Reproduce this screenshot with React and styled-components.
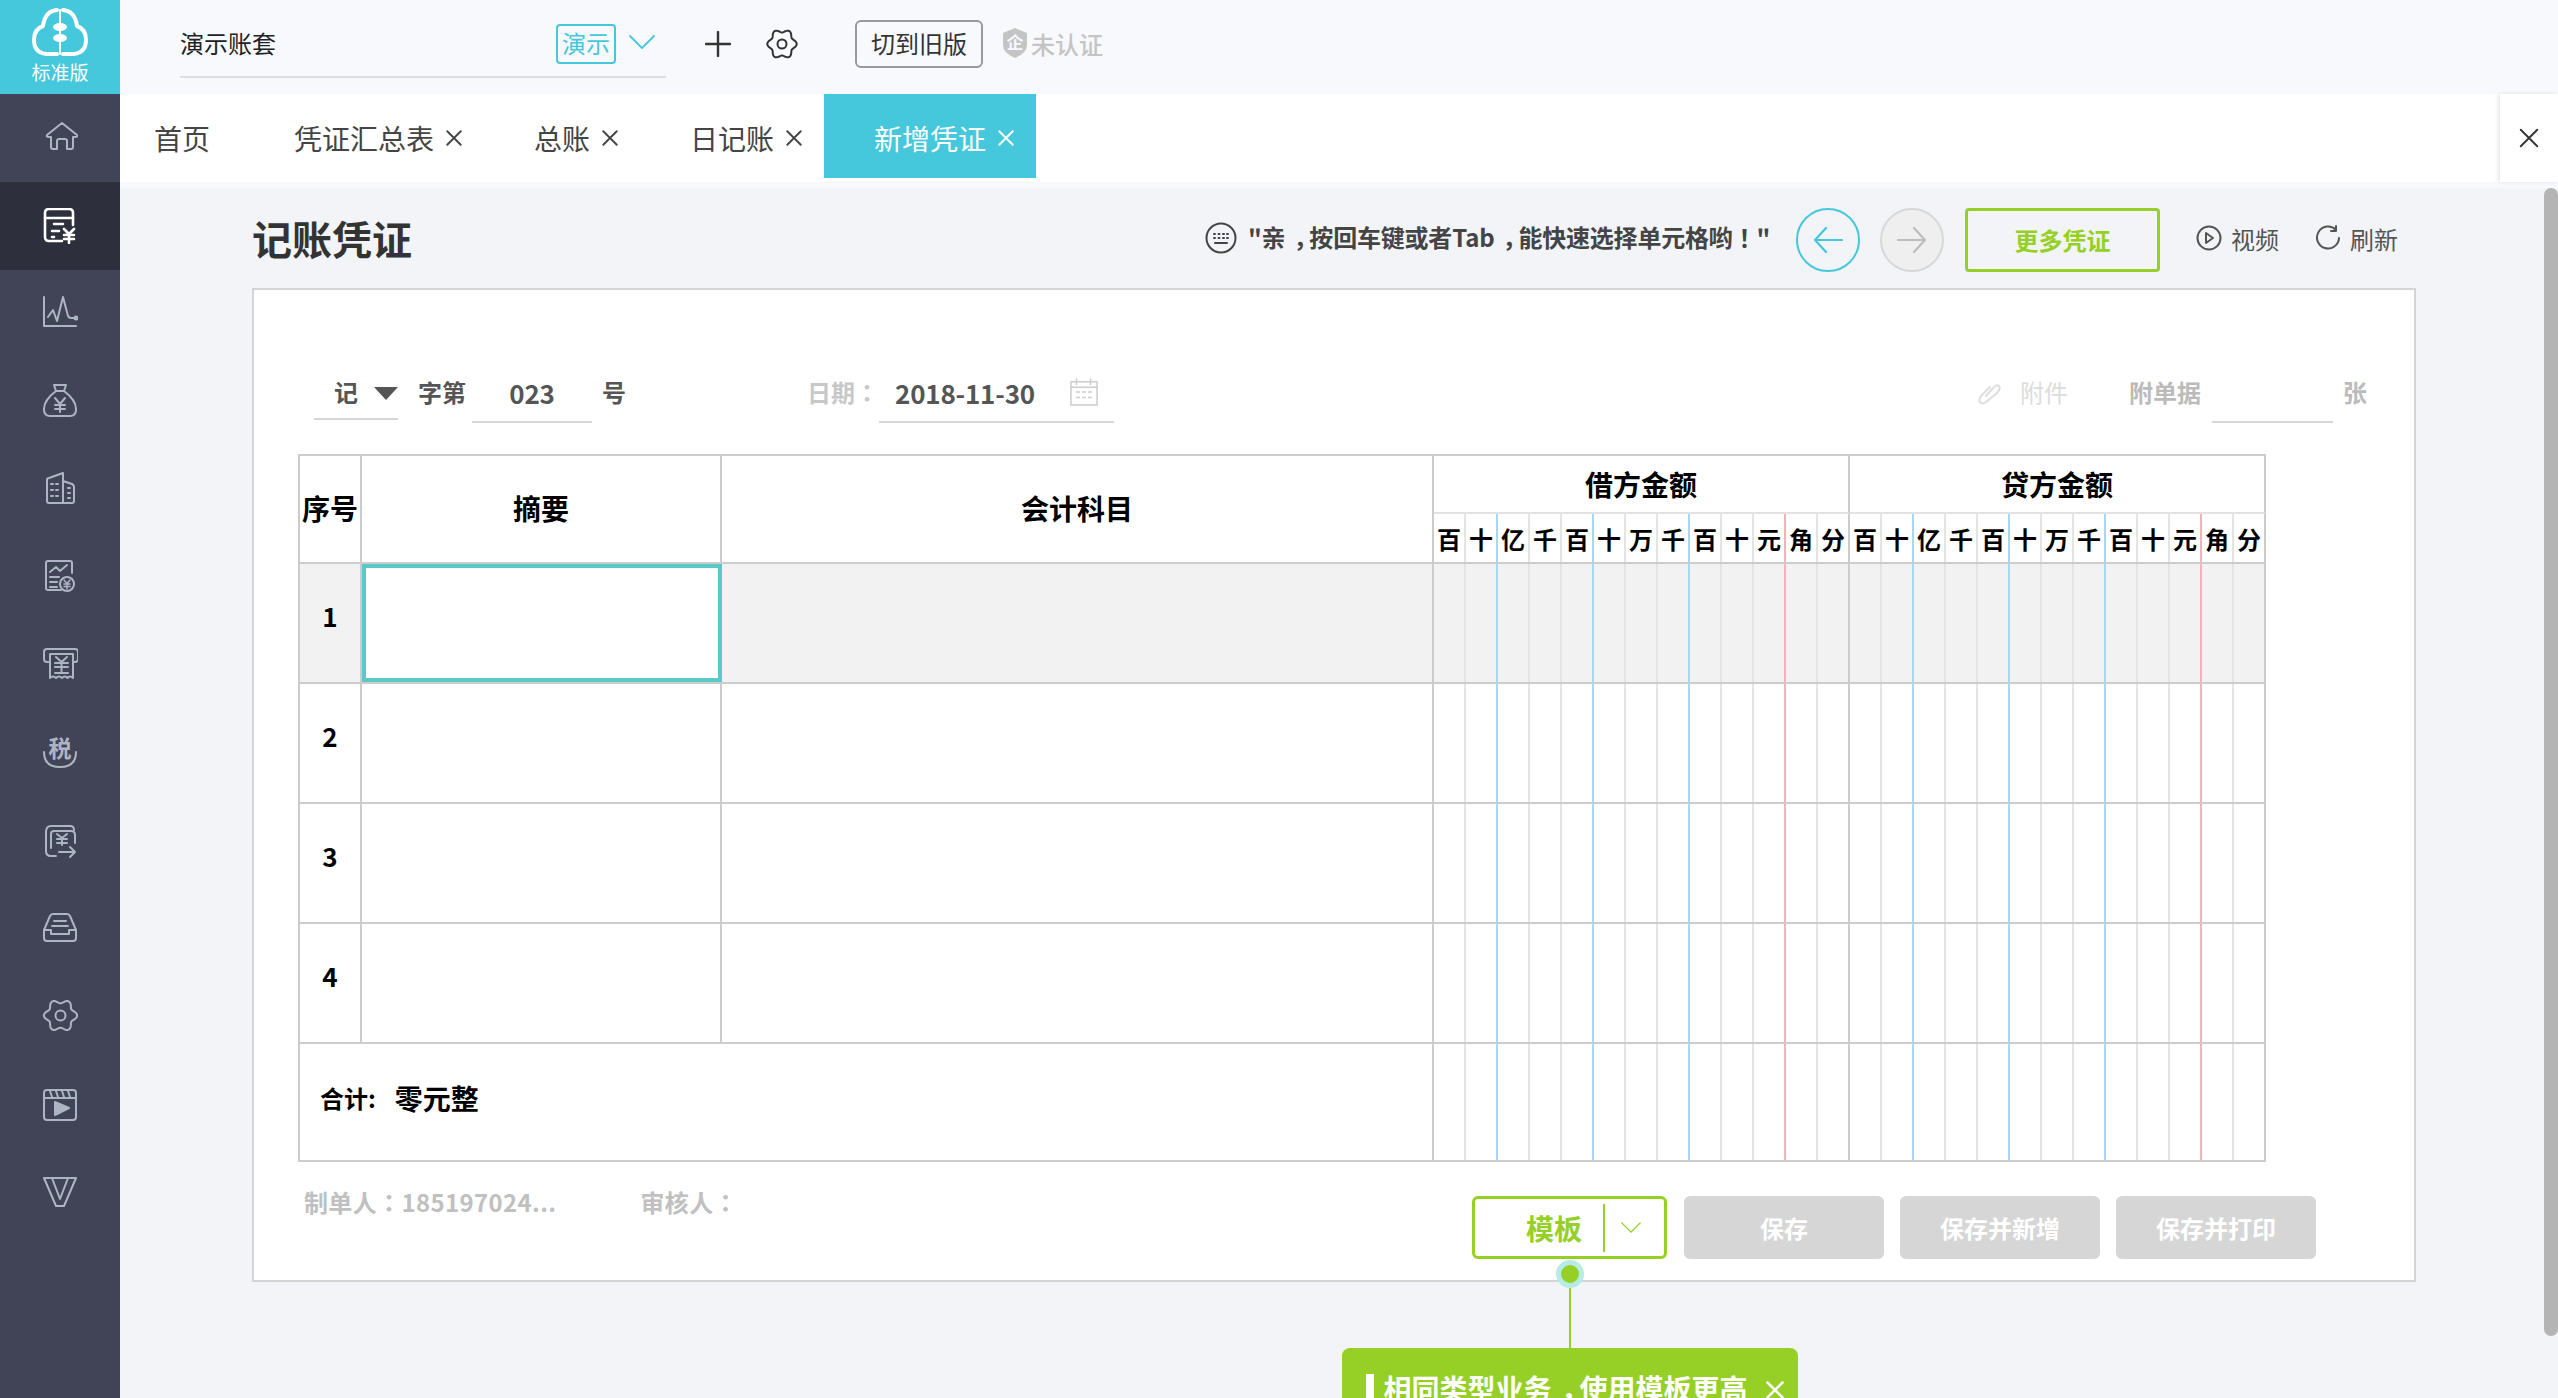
import React from "react";
import styled, { createGlobalStyle } from "styled-components";

const GREEN = "#96d026";
const TEAL = "#46c8dc";
const FONT = `"Noto Sans CJK SC", "Noto Sans", sans-serif`;

const Global = createGlobalStyle`
  html, body { margin: 0; padding: 0; width: 100%; height: 100%; overflow: hidden; }
  body { font-family: ${FONT}; background: #f8f9fd; }
  #root { width: 100%; height: 100%; }
  * { box-sizing: border-box; }
  svg { display: block; flex: none; }
`;

const Page = styled.div`
  display: flex;
  width: 2558px;
  height: 1398px;
  overflow: hidden;
`;

/* punctuation set centred in its em box, as in the reference */
const Punct = styled.span`
  font-family: "Noto Sans CJK TC", sans-serif;
`;
const Comma = styled.span`
  display: inline-block;
  padding-left: 0.34em;
  letter-spacing: -0.34em;
`;

/* ---------- sidebar ---------- */
const Sidebar = styled.aside`
  flex: none;
  width: 120px;
  background: #414356;
  display: flex;
  flex-direction: column;
`;
const Logo = styled.div`
  height: 94px;
  background: ${TEAL};
  display: flex;
  flex-direction: column;
  align-items: center;
  padding-top: 7px;
  color: #fff;
`;
const LogoText = styled.span`
  font-size: 19px;
  line-height: 22px;
  margin-top: 4px;
`;
const NavItem = styled.div`
  height: 88px;
  display: flex;
  align-items: center;
  justify-content: center;
  background: ${(p) => (p.$active ? "#2d2f3d" : "transparent")};
  color: ${(p) => (p.$active ? "#ffffff" : "#adb5c2")};
`;

/* ---------- top ---------- */
const Main = styled.main`
  flex: 1;
  min-width: 0;
  display: flex;
  flex-direction: column;
  background: #f8f9fd;
`;
const TopBar = styled.header`
  height: 94px;
  flex: none;
  display: flex;
  align-items: flex-start;
  padding-left: 60px;
`;
const AccountBox = styled.div`
  width: 486px;
  height: 63px;
  margin-top: 15px;
  padding: 0 11px 3px 0;
  border-bottom: 2px solid #dddddd;
  display: flex;
  align-items: center;
  font-size: 24px;
  color: #222;
`;
const AccountName = styled.span`
  padding-bottom: 3px;
`;
const Tag = styled.span`
  margin-left: auto;
  width: 60px;
  height: 40px;
  border: 2px solid ${TEAL};
  border-radius: 4px;
  color: ${TEAL};
  font-size: 24px;
  line-height: 33px;
  text-align: center;
  margin-right: 13px;
`;
const TagArrow = styled.span`
  color: ${TEAL};
  margin-bottom: 5px;
`;
const Tools = styled.div`
  height: 88px;
  display: flex;
  align-items: center;
  color: #333;
`;
const PlusWrap = styled.span`
  margin-left: 39px;
`;
const GearWrap = styled.span`
  margin-left: 34px;
`;
const OldButton = styled.button`
  margin-left: 56px;
  width: 128px;
  height: 48px;
  padding: 0 0 3px;
  border: 2px solid #999;
  border-radius: 6px;
  background: transparent;
  font-family: ${FONT};
  font-size: 24px;
  color: #333;
`;
const Unverified = styled.div`
  margin-left: 19px;
  display: flex;
  align-items: center;
  gap: 3px;
  color: #c4c4c4;
  font-size: 24px;
  font-weight: 500;
  padding-bottom: 2px;
`;

/* ---------- tabs ---------- */
const TabBar = styled.nav`
  height: 88px;
  flex: none;
  margin-bottom: 6px;
  background: #fff;
  display: flex;
  align-items: flex-start;
`;
const Tab = styled.div`
  height: 84px;
  padding: 4px ${(p) => (p.$home ? "34px" : "21px")} 0 ${(p) => (p.$home ? "34px" : "50px")};
  display: flex;
  align-items: center;
  gap: 11px;
  font-size: 28px;
  color: ${(p) => (p.$active ? "#fff" : "#444")};
  background: ${(p) => (p.$active ? TEAL : "transparent")};
`;
const CloseAll = styled.div`
  margin-left: auto;
  width: 58px;
  height: 88px;
  display: flex;
  align-items: center;
  justify-content: center;
  color: #333;
  box-shadow: -2px 0 4px rgba(0, 0, 0, 0.1);
`;

/* ---------- content ---------- */
const Content = styled.section`
  flex: 1;
  min-height: 0;
  position: relative;
  overflow: hidden;
  background: #f2f4f7;
  padding: 20px 0 0 132px;
`;
const Scrollbar = styled.div`
  position: absolute;
  top: 0;
  right: 0;
  width: 14px;
  height: 1148px;
  background: #b4b4b4;
  border-radius: 7px;
`;
const TitleRow = styled.div`
  width: 2164px;
  height: 64px;
  margin-bottom: 16px;
  padding-right: 18px;
  display: flex;
  align-items: center;
`;
const Title = styled.h1`
  margin: 0;
  padding-bottom: 5px;
  font-size: 40px;
  line-height: 58px;
  font-weight: 700;
  color: #333;
`;
const Hint = styled.div`
  margin-left: auto;
  padding-bottom: 5px;
  display: flex;
  align-items: center;
  gap: 11px;
  font-size: 24px;
  font-weight: 700;
  color: #444;
`;
const HintText = styled.span`
  letter-spacing: -0.2px;
  padding-bottom: 2px;
`;
const RoundButton = styled.span`
  width: 64px;
  height: 64px;
  margin-left: ${(p) => p.$ml}px;
  border-radius: 50%;
  border: 2px solid ${(p) => (p.$on ? TEAL : "#d8d8d8")};
  background: ${(p) => (p.$on ? "transparent" : "#efefef")};
  color: ${(p) => (p.$on ? TEAL : "#bdbdbd")};
  display: flex;
  align-items: center;
  justify-content: center;
`;
const MoreButton = styled.button`
  width: 195px;
  height: 64px;
  margin-left: 21px;
  padding: 0 0 2px;
  border: 3px solid ${GREEN};
  border-radius: 4px;
  background: transparent;
  font-family: ${FONT};
  font-size: 24px;
  font-weight: 700;
  color: ${GREEN};
`;
const ActionLink = styled.span`
  margin-left: 36px;
  padding-bottom: 4px;
  display: flex;
  align-items: center;
  gap: 9px;
  font-size: 24px;
  color: #555;
`;

/* ---------- voucher card ---------- */
const Card = styled.div`
  width: 2164px;
  height: 994px;
  background: #fff;
  border: 2px solid #d4d4d4;
  padding: 73px 0 0 44px;
`;
const FormRow = styled.div`
  height: 61px;
  padding-right: 47px;
  display: flex;
  align-items: flex-start;
  font-size: 24px;
  font-weight: 700;
  color: #555;
  margin-bottom: 30px;
`;
const FormText = styled.span`
  margin-left: ${(p) => p.$ml || 0}px;
  height: 59px;
  line-height: 58px;
  white-space: nowrap;
  color: ${(p) => p.$color || "inherit"};
  font-weight: ${(p) => p.$weight || 700};
`;
const TypeSelect = styled.div`
  margin-left: 16px;
  width: 84px;
  height: 57px;
  padding-left: 20px;
  line-height: 58px;
  border-bottom: 2px solid #d6d6d6;
  position: relative;
`;
const Caret = styled.span`
  position: absolute;
  right: 0;
  top: 24px;
  width: 0;
  height: 0;
  border-left: 12px solid transparent;
  border-right: 12px solid transparent;
  border-top: 13px solid #555;
`;
const UnderField = styled.div`
  margin-left: ${(p) => p.$ml || 0}px;
  width: ${(p) => p.$w}px;
  height: 60px;
  padding-left: ${(p) => p.$pl || 0}px;
  border-bottom: 2px solid #d6d6d6;
  display: flex;
  align-items: center;
  justify-content: ${(p) => (p.$center ? "center" : "flex-start")};
  font-size: 26px;
  letter-spacing: -0.2px;
`;
const CalendarWrap = styled.span`
  margin-left: 35px;
  color: #ccc;
`;
const RightGroup = styled.div`
  margin-left: auto;
  display: flex;
  align-items: flex-start;
`;
const ClipWrap = styled.span`
  margin-top: 18px;
  margin-right: 19px;
  color: #ddd;
`;

/* ---------- table ---------- */
const Table = styled.div`
  width: 1968px;
  border-top: 2px solid #ccc;
  border-left: 2px solid #ccc;
  color: #000;
`;
const Row = styled.div`
  display: flex;
  height: ${(p) => p.$h}px;
  border-bottom: ${(p) => (p.$head ? "0" : "2px solid #ccc")};
  background: ${(p) => (p.$tint ? "#f2f2f2" : "transparent")};
`;
const Cell = styled.div`
  flex: none;
  width: ${(p) => p.$w}px;
  display: flex;
  align-items: center;
  justify-content: ${(p) => (p.$left ? "flex-start" : "center")};
  padding-left: ${(p) => (p.$left ? 20 : 0)}px;
  padding-bottom: ${(p) => (p.$left ? 9 : 0)}px;
  border-right: 2px solid #ccc;
  font-size: 28px;
  font-weight: 700;
`;
const HeadCell = styled(Cell)`
  height: 108px;
  border-bottom: 2px solid #ccc;
  padding-bottom: 2px;
`;
const NumberCell = styled(Cell)`
  font-size: 26px;
  padding-bottom: 15px;
`;
const ActiveCell = styled(Cell)`
  border: 4px solid #5bc9c7;
  background: #fff;
`;
const AmountHead = styled.div`
  flex: none;
  width: 416px;
  height: 108px;
  display: flex;
  flex-direction: column;
  border-bottom: 2px solid #ccc;
`;
const AmountTitle = styled.div`
  height: 58px;
  border-bottom: 2px solid #e2e2e2;
  border-right: 2px solid #ccc;
  display: flex;
  align-items: center;
  justify-content: center;
  font-size: 28px;
  font-weight: 700;
`;
const DigitRow = styled.div`
  flex: 1;
  min-height: 0;
  display: flex;
`;
const lineColor = (kind) =>
  kind === "blue" ? "#a8d8f0" : kind === "red" ? "#f0b4b8" : kind === "end" ? "#ccc" : "#e4e4e4";
const Digit = styled.div`
  flex: none;
  width: 32px;
  border-right: 2px solid ${(p) => lineColor(p.$kind)};
  display: flex;
  align-items: center;
  justify-content: center;
  font-size: 24px;
  font-weight: 700;
`;
const TotalLabel = styled.span`
  font-size: 24px;
  margin-right: 19px;
`;

/* ---------- footer ---------- */
const Footer = styled.div`
  margin-top: 24px;
  padding-right: 98px;
  display: flex;
  align-items: flex-start;
`;
const Signer = styled.span`
  margin-left: ${(p) => p.$ml}px;
  line-height: 32px;
  font-size: 24px;
  font-weight: 700;
  letter-spacing: 0.35px;
  color: #c0c0c0;
  white-space: nowrap;
`;
const Buttons = styled.div`
  margin-left: auto;
  margin-top: 10px;
  display: flex;
  gap: 16px;
`;
const TemplateButton = styled.div`
  width: 195px;
  height: 63px;
  margin-right: 1px;
  border: 3px solid ${GREEN};
  border-radius: 6px;
  background: #fff;
  color: ${GREEN};
  display: flex;
  align-items: center;
  position: relative;
  font-size: 28px;
  font-weight: 700;
`;
const TemplateLabel = styled.span`
  width: 130px;
  height: 48px;
  border-right: 2px solid ${GREEN};
  display: flex;
  align-items: center;
  justify-content: flex-end;
  padding-right: 21px;
`;
const TemplateArrow = styled.span`
  margin-left: 16px;
`;
const SaveButton = styled.button`
  width: 200px;
  height: 63px;
  padding: 0;
  border: 0;
  border-radius: 6px;
  background: #d6d6d6;
  color: #fff;
  font-family: ${FONT};
  font-size: 24px;
  font-weight: 700;
`;
const Guide = styled.div`
  position: absolute;
  top: 100%;
  left: 50%;
  transform: translateX(-50%);
  display: flex;
  flex-direction: column;
  align-items: center;
`;
const GuideDot = styled.span`
  width: 28px;
  height: 28px;
  border-radius: 50%;
  background: ${GREEN};
  border: 5px solid #b6ece4;
  margin-top: 4px;
`;
const GuideLine = styled.span`
  width: 2px;
  height: 60px;
  background: ${GREEN};
`;
const Tip = styled.div`
  width: 456px;
  height: 90px;
  background: ${GREEN};
  border-radius: 8px 8px 0 0;
  padding: 26px 0 0 24px;
  display: flex;
  align-items: flex-start;
  color: #fff;
`;
const TipBar = styled.span`
  flex: none;
  width: 8px;
  height: 40px;
  background: #fff;
  margin-right: 10px;
`;
const TipText = styled.span`
  font-size: 28px;
  font-weight: 700;
  line-height: 28px;
  white-space: nowrap;
  margin-right: 17px;
`;
const TipClose = styled.span`
  margin-top: 6px;
`;

/* ---------- icons ---------- */
const Ic = ({ children, w = 36, h = 36, vb, sw = 2 }) => (
  <svg width={w} height={h} viewBox={vb || `0 0 ${w} ${h}`} fill="none" stroke="currentColor" strokeWidth={sw} strokeLinecap="round" strokeLinejoin="round">
    {children}
  </svg>
);

const gearPath = (cx, cy, rx, ry, lobes, amp) => {
  const pts = [];
  for (let i = 0; i < 96; i++) {
    const t = (i / 96) * Math.PI * 2;
    const r = 1 + amp * Math.cos(lobes * t);
    pts.push(`${(cx + rx * r * Math.cos(t)).toFixed(2)} ${(cy + ry * r * Math.sin(t)).toFixed(2)}`);
  }
  return `M${pts.join("L")}Z`;
};

const CloudLogo = () => (
  <svg width="60" height="50" viewBox="0 0 60 50" fill="none" stroke="#fff" strokeWidth="4" strokeLinecap="round" strokeLinejoin="round">
    <path d="M27 3 Q15 4 13 19 Q4 22 4 33 Q4 46 17 47 H27" />
    <path d="M33 3 Q45 4 47 19 Q56 22 56 33 Q56 46 43 47 H33" />
    <path d="M30 3 V47" strokeWidth="2" />
    <ellipse cx="30" cy="20" rx="7" ry="4" fill="#fff" stroke="none" />
    <ellipse cx="30" cy="31" rx="7" ry="4" fill="#fff" stroke="none" />
  </svg>
);

const navIcons = [
  <Ic key="home"><path d="M5 15 L20 3 L35 15 Q36 17 33 17 H31 V27 Q31 29 29 29 H25 V21 Q25 19 23 19 H17 Q15 19 15 21 V29 H11 Q9 29 9 27 V17 H7 Q4 17 5 15Z" /></Ic>,
  <Ic key="voucher" sw={2.6}>
    <path d="M20 33 H7 Q3 33 3 29 V5 Q3 1 7 1 H27 Q31 1 31 5 V17" /><path d="M3 10 H31" />
    <path d="M12 16 H21 M10 23 H17 M10 29 H12" />
    <path d="M22 21 L27 26 L32 21 M27 26 V35 M22 27 H32 M22 31 H32" />
  </Ic>,
  <Ic key="chart">
    <path d="M2 1 V30 H34" /><path d="M6 21 L11 14 L15 25 L21 1 L26 20 Q27 22 29 22 H34" />
    <circle cx="34" cy="22" r="1.5" fill="currentColor" />
  </Ic>,
  <Ic key="bag">
    <path d="M12 1 H24 L22 7 H14 Z" /><path d="M14 7 Q2 16 2 25 Q2 32 8 32 H28 Q34 32 34 25 Q34 16 22 7" />
    <path d="M13 14 L18 20 L23 14 M18 20 V28 M13 21 H23 M13 25 H23" />
  </Ic>,
  <Ic key="building">
    <path d="M5 8 Q5 6 7 6 L21 1 V31 H7 Q5 31 5 29 Z" /><path d="M21 9 L30 12 Q32 13 32 15 V29 Q32 31 30 31 H21" />
    <path d="M9 12 H11 M14 12 H16 M9 18 H11 M14 18 H16 M9 24 H11 M14 24 H16 M26 16 H28 M26 21 H28 M26 26 H28" />
  </Ic>,
  <Ic key="report">
    <path d="M30 13 V3 Q30 1 28 1 H6 Q4 1 4 3 V28 Q4 30 6 30 H19" /><path d="M8 12 L14 7 L18 11 L25 5" />
    <path d="M8 17 H17 M8 22 H15 M8 27 H15" /><circle cx="25" cy="24" r="7" />
    <path d="M22 20 L25 23.5 L28 20 M25 23.5 V29 M22 24 H28 M22 26.5 H28" strokeWidth="1.5" />
  </Ic>,
  <Ic key="receipt">
    <path d="M8 14 H5 Q2 14 2 11 V4 Q2 1 5 1 H33 Q36 1 36 4 V11 Q36 14 33 14 H31" />
    <path d="M8 6 H31 V30 Q28 27 25.5 30 Q23 27 20 30 Q17 27 14 30 Q11 27 8 30 Z" />
    <path d="M14 9 L19.5 14 L25 9 M19.5 14 V24 M13 15 H26 M13 19 H26 M13 25 H26" />
  </Ic>,
  <Ic key="tax" w={36} h={52} vb="0 -8 36 52">
    <text x="18" y="21" textAnchor="middle" fontSize="23" fontWeight="700" fontFamily={FONT} fill="currentColor" stroke="none">税</text>
    <path d="M2 16 Q2 31 18 31 Q34 31 34 16" />
  </Ic>,
  <Ic key="stack">
    <path d="M4 8 V27 Q4 32 9 32 H14" /><path d="M4 8 Q4 2 9 2 H28 Q32 2 32 6" />
    <path d="M9 24 V10 Q9 7 12 7 H29 Q33 7 33 11 V19" />
    <path d="M15 10 L20 14 L25 10 M20 14 V21 M15 15 H25 M15 19 H25" />
    <path d="M17 28 H33 M28 23 L33 28 L28 33" />
  </Ic>,
  <Ic key="tray">
    <path d="M2 18 L8 4 Q9 2 11 2 H25 Q27 2 28 4 L34 18" />
    <path d="M2 18 V26 Q2 29 5 29 H31 Q34 29 34 26 V18 H27 V22 H9 V18 Z" />
    <path d="M12 9 H24 M10 14 H26" />
  </Ic>,
  <Ic key="gear"><path d={gearPath(18.5, 15.5, 14.6, 14.2, 6, 0.14)} /><circle cx="18.5" cy="15.5" r="5" /></Ic>,
  <Ic key="clapper">
    <rect x="2" y="2" width="32" height="30" rx="3" /><path d="M2 10 H34" />
    <path d="M8 3 L10 9 M14 3 L16 9 M20 3 L22 9 M26 3 L28 9" />
    <path d="M13 14 L27 20 L13 27Z" fill="currentColor" />
  </Ic>,
  <Ic key="v"><path d="M2 2 H34 L22 30 H14 Z" /><path d="M10 2 L18 23 L26 2" /></Ic>,
];

const XIcon = ({ size = 18, sw = 1.7 }) => (
  <Ic w={size} h={size} vb="0 0 16 16" sw={sw}><path d="M2 2 L14 14 M14 2 L2 14" /></Ic>
);
const ChevronDown = ({ w = 26, h = 14, sw = 2 }) => (
  <Ic w={w} h={h} vb="0 0 26 14" sw={sw}><path d="M1 1 L13 13 L25 1" /></Ic>
);

/* ---------- data ---------- */
const digits = ["百", "十", "亿", "千", "百", "十", "万", "千", "百", "十", "元", "角", "分"];
const kinds = ["", "blue", "", "", "blue", "", "", "blue", "", "", "red", "", "end"];

const DigitCells = ({ labels }) =>
  kinds.map((k, i) => (
    <Digit key={i} $kind={k}>
      {labels ? digits[i] : null}
    </Digit>
  ));

const tabs = [
  { label: "首页", home: true },
  { label: "凭证汇总表" },
  { label: "总账" },
  { label: "日记账" },
  { label: "新增凭证", active: true },
];

export default function App() {
  return (
    <>
      <Global />
      <Page>
        <Sidebar>
          <Logo>
            <CloudLogo />
            <LogoText>标准版</LogoText>
          </Logo>
          {navIcons.map((icon, i) => (
            <NavItem key={i} $active={i === 1}>{icon}</NavItem>
          ))}
        </Sidebar>

        <Main>
          <TopBar>
            <AccountBox>
              <AccountName>演示账套</AccountName>
              <Tag>演示</Tag>
              <TagArrow><ChevronDown sw={1.8} /></TagArrow>
            </AccountBox>
            <Tools>
              <PlusWrap>
                <Ic w={26} h={26} sw={2.4}><path d="M13 1 V25 M1 13 H25" /></Ic>
              </PlusWrap>
              <GearWrap>
                <Ic w={34} h={32}><path d={gearPath(17, 16, 13, 13.2, 6, 0.13)} /><circle cx="17" cy="16" r="4.5" /></Ic>
              </GearWrap>
              <OldButton>切到旧版</OldButton>
              <Unverified>
                <svg width="26" height="30" viewBox="0 0 26 30">
                  <path d="M13 0 L25 5 V17 Q25 25 13 30 Q1 25 1 17 V5 Z" fill="#c4c4c4" />
                  <text x="13" y="21" textAnchor="middle" fontSize="17" fontWeight="700" fontFamily={FONT} fill="#f8f9fd">企</text>
                </svg>
                未认证
              </Unverified>
            </Tools>
          </TopBar>

          <TabBar>
            {tabs.map((t) => (
              <Tab key={t.label} $home={t.home} $active={t.active}>
                {t.label}
                {!t.home && <XIcon />}
              </Tab>
            ))}
            <CloseAll>
              <XIcon size={22} sw={1.4} />
            </CloseAll>
          </TabBar>

          <Content>
            <Scrollbar />
            <TitleRow>
              <Title>记账凭证</Title>
              <Hint>
                <Ic w={32} h={32}>
                  <circle cx="16" cy="16" r="14.5" />
                  <path d="M9 12 H10 M13.5 12 H14.5 M18 12 H19 M22 12 H23 M9 16 H10 M13.5 16 H14.5 M18 16 H19 M22 16 H23 M10 21 H22" />
                </Ic>
                <HintText>"亲<Comma>，</Comma>按回车键或者Tab<Comma>，</Comma>能快速选择单元格哟<Punct>！</Punct>"</HintText>
              </Hint>
              <RoundButton $on $ml={26}>
                <Ic w={30} h={26} sw={2.2}><path d="M29 13 H2 M13 1 L2 13 L13 25" /></Ic>
              </RoundButton>
              <RoundButton $ml={20}>
                <Ic w={30} h={26} sw={2.2}><path d="M1 13 H28 M17 1 L28 13 L17 25" /></Ic>
              </RoundButton>
              <MoreButton>更多凭证</MoreButton>
              <ActionLink>
                <Ic w={26} h={26}><circle cx="13" cy="13" r="11.5" /><path d="M10 8 L17 13 L10 18Z" /></Ic>
                视频
              </ActionLink>
              <ActionLink>
                <Ic w={26} h={26}><path d="M21 5 A11 11 0 1 0 24 13" /><path d="M21 1 V6 H16" /></Ic>
                刷新
              </ActionLink>
            </TitleRow>

            <Card>
              <FormRow>
                <TypeSelect>记<Caret /></TypeSelect>
                <FormText $ml={20}>字第</FormText>
                <UnderField $ml={6} $w={120} $center>023</UnderField>
                <FormText $ml={10}>号</FormText>
                <FormText $ml={181} $color="#c8c8c8">日期<Punct>：</Punct></FormText>
                <UnderField $w={235} $pl={16}>
                  2018-11-30
                  <CalendarWrap>
                    <Ic w={28} h={28} vb="0 0 30 30" sw={1.6}>
                      <rect x="1" y="4" width="28" height="25" /><path d="M1 10 H29 M7 1 V7 M22 1 V7" />
                      <path d="M7 15 H10 M13.5 15 H16.5 M20 15 H23 M7 21 H10 M13.5 21 H16.5 M20 21 H23" />
                    </Ic>
                  </CalendarWrap>
                </UnderField>
                <RightGroup>
                  <ClipWrap>
                    <Ic w={24} h={24}><path d="M9 15 L17 6 Q20 3 22 5 Q24 8 20 12 L9 21 Q5 24 3 21 Q1 18 5 14 L13 6" /></Ic>
                  </ClipWrap>
                  <FormText $color="#dcdcdc" $weight={400}>附件</FormText>
                  <FormText $ml={61} $color="#bbb">附单据</FormText>
                  <UnderField $ml={11} $w={121} />
                  <FormText $ml={10} $color="#bbb">张</FormText>
                </RightGroup>
              </FormRow>

              <Table>
                <Row $h={108} $head>
                  <HeadCell $w={62}>序号</HeadCell>
                  <HeadCell $w={360}>摘要</HeadCell>
                  <HeadCell $w={712}>会计科目</HeadCell>
                  {["借方金额", "贷方金额"].map((title) => (
                    <AmountHead key={title}>
                      <AmountTitle>{title}</AmountTitle>
                      <DigitRow><DigitCells labels /></DigitRow>
                    </AmountHead>
                  ))}
                </Row>
                {[1, 2, 3, 4].map((n) => (
                  <Row key={n} $h={120} $tint={n === 1}>
                    <NumberCell $w={62}>{n}</NumberCell>
                    {n === 1 ? <ActiveCell $w={360} /> : <Cell $w={360} />}
                    <Cell $w={712} />
                    <DigitCells />
                    <DigitCells />
                  </Row>
                ))}
                <Row $h={118}>
                  <Cell $w={1134} $left>
                    <TotalLabel>合计:</TotalLabel>零元整
                  </Cell>
                  <DigitCells />
                  <DigitCells />
                </Row>
              </Table>

              <Footer>
                <Signer $ml={6}>制单人<Punct>：</Punct>185197024...</Signer>
                <Signer $ml={84}>审核人<Punct>：</Punct></Signer>
                <Buttons>
                  <TemplateButton>
                    <TemplateLabel>模板</TemplateLabel>
                    <TemplateArrow><ChevronDown w={20} h={11} sw={1.8} /></TemplateArrow>
                    <Guide>
                      <GuideDot />
                      <GuideLine />
                      <Tip>
                        <TipBar />
                        <TipText>相同类型业务<Comma>，</Comma>使用模板更高</TipText>
                        <TipClose><XIcon size={20} sw={2} /></TipClose>
                      </Tip>
                    </Guide>
                  </TemplateButton>
                  <SaveButton>保存</SaveButton>
                  <SaveButton>保存并新增</SaveButton>
                  <SaveButton>保存并打印</SaveButton>
                </Buttons>
              </Footer>
            </Card>
          </Content>
        </Main>
      </Page>
    </>
  );
}
